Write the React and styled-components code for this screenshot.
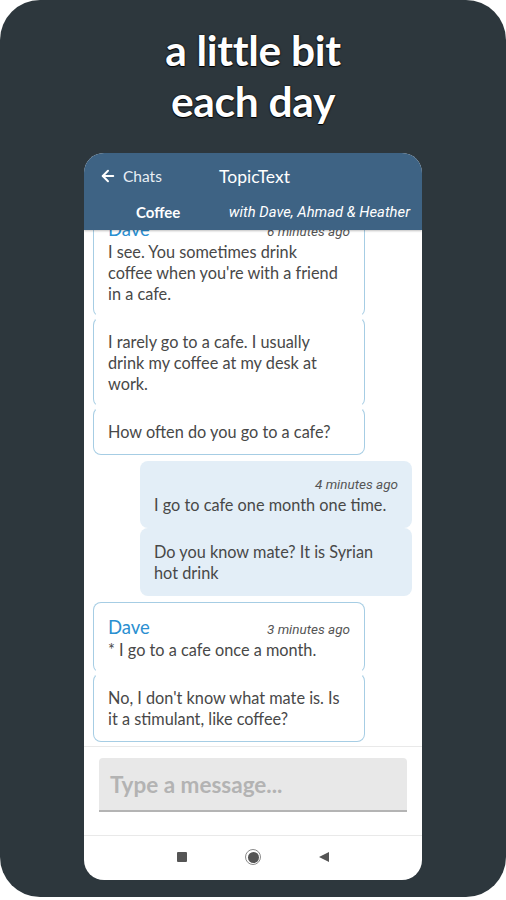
import styled, { createGlobalStyle } from "styled-components";
import { ArrowLeft } from "lucide-react";

const GlobalStyle = createGlobalStyle`
  body {
    margin: 0;
    background: #ffffff;
    font-family: Lato, "Noto Sans", sans-serif;
  }
`;

const Page = styled.div`
  width: 506px;
  height: 897px;
  background: #2d373d;
  border-radius: 40px;
  display: flex;
  flex-direction: column;
  align-items: center;
  box-sizing: border-box;
  padding-top: 24px;
`;

const Title = styled.h1`
  margin: 0;
  font-family: Lato, sans-serif;
  font-weight: 700;
  font-size: 42.5px;
  line-height: 51px;
  color: #ffffff;
  text-align: center;
  text-shadow: 0 0 2px #000, 0 1px 1px #000;
  letter-spacing: -0.3px;
`;

const Phone = styled.div`
  margin-top: 27px;
  width: 338px;
  height: 727px;
  background: #ffffff;
  border-radius: 20px;
  overflow: hidden;
  display: flex;
  flex-direction: column;
`;

const Header = styled.div`
  flex: none;
  height: 77px;
  box-sizing: border-box;
  padding: 10px 12px 5px 15px;
  background: #3e6384;
  color: #ffffff;
  display: flex;
  flex-direction: column;
  gap: 10px;
  position: relative;
  z-index: 1;
  box-shadow: 0 1px 2px rgba(0, 0, 0, 0.25);
`;

const HeaderRow = styled.div`
  height: 26px;
  display: grid;
  grid-template-columns: ${(p) => p.$cols};
  align-items: center;
`;

const Back = styled.div`
  display: flex;
  align-items: center;
  gap: 6px;
  font-family: Lato, sans-serif;
  font-size: 15.5px;
  color: #e8eef4;
`;

const TopicTitle = styled.div`
  font-family: Lato, sans-serif;
  font-weight: 400;
  font-size: 17.5px;
  text-align: center;
`;

const Topic = styled.div`
  font-family: Lato, sans-serif;
  font-weight: 700;
  font-size: 15px;
  padding-left: 37px;
`;

const Members = styled.div`
  font-family: Roboto, sans-serif;
  font-style: italic;
  font-size: 14.8px;
  text-align: right;
  white-space: nowrap;
`;

const ChatArea = styled.div`
  flex: 1;
  min-height: 0;
  overflow: hidden;
  display: flex;
  flex-direction: column;
  justify-content: flex-end;
  gap: 6px;
  padding: 0 10px 4px 9px;
`;

const Group = styled.div`
  flex: none;
  width: 272px;
  align-self: ${(p) => (p.$mine ? "flex-end" : "flex-start")};
  display: flex;
  flex-direction: column;
`;

const Bubble = styled.div`
  flex: none;
  box-sizing: border-box;
  border-radius: 8px;
  padding: ${(p) => (p.$mine ? "13px 14px" : "12.5px 14px")};
  background: ${(p) => (p.$mine ? "#e3eef7" : "#ffffff")};
  border: ${(p) => (p.$mine ? "none" : "1px solid #a6cde4")};
  border-top-color: ${(p) => (p.$mine || p.$first ? "#a6cde4" : "transparent")};
  border-bottom-color: ${(p) => (p.$mine || p.$last ? "#a6cde4" : "transparent")};
  font-size: 16.3px;
  line-height: 21px;
  color: #484848;
  white-space: pre-line;
`;

const Meta = styled.div`
  display: flex;
  justify-content: ${(p) => (p.$mine ? "flex-end" : "space-between")};
  align-items: baseline;
  height: ${(p) => (p.$mine ? "20px" : "23px")};
  white-space: nowrap;
`;

const Name = styled.span`
  font-size: 18.5px;
  color: #2b8fd1;
  line-height: 23px;
`;

const Time = styled.span`
  font-family: Roboto, sans-serif;
  font-style: italic;
  font-size: 13.5px;
  color: #555;
`;

const Divider = styled.div`
  flex: none;
  height: 1px;
  background: #e9e9e9;
`;

const Composer = styled.div`
  flex: none;
  padding: 11px 15px 23px 15px;
`;

const Input = styled.div`
  height: 54px;
  box-sizing: border-box;
  background: #e8e8e8;
  border-radius: 4px 4px 0 0;
  border-bottom: 2px solid #b4b4b4;
  display: flex;
  align-items: center;
  padding: 0 11px;
  font-size: 22.5px;
  font-weight: 700;
  color: #b3b3b3;
`;

const NavBar = styled.div`
  flex: none;
  height: 44px;
  display: flex;
  justify-content: center;
  align-items: center;
  gap: 58px;
  padding-bottom: 2px;
  box-sizing: border-box;
`;

const Square = styled.div`
  width: 10px;
  height: 10px;
  background: #555;
  border-radius: 1px;
`;

const HomeRing = styled.div`
  width: 14px;
  height: 14px;
  border-radius: 50%;
  border: 1.5px solid #8a8a8a;
  display: flex;
  align-items: center;
  justify-content: center;
`;

const HomeDot = styled.div`
  width: 11px;
  height: 11px;
  border-radius: 50%;
  background: #555;
`;

const BackTri = styled.div`
  width: 0;
  height: 0;
  border-top: 5.5px solid transparent;
  border-bottom: 5.5px solid transparent;
  border-right: 10px solid #555;
`;

const groups = [
  {
    mine: false,
    items: [
      {
        name: "Dave",
        time: "6 minutes ago",
        text: "I see. You sometimes drink\ncoffee when you're with a friend\nin a cafe.",
      },
      { text: "I rarely go to a cafe. I usually\ndrink my coffee at my desk at\nwork." },
      { text: "How often do you go to a cafe?" },
    ],
  },
  {
    mine: true,
    items: [
      { time: "4 minutes ago", text: "I go to cafe one month one time." },
      { text: "Do you know mate? It is Syrian\nhot drink" },
    ],
  },
  {
    mine: false,
    items: [
      { name: "Dave", time: "3 minutes ago", text: "* I go to a cafe once a month." },
      { text: "No, I don't know what mate is. Is\nit a stimulant, like coffee?" },
    ],
  },
];

export default function App() {
  return (
    <>
      <GlobalStyle />
      <Page>
        <Title>
          a little bit
          <br />
          each day
        </Title>
        <Phone>
          <Header>
            <HeaderRow $cols="1fr auto 1fr">
              <Back>
                <ArrowLeft size={18} strokeWidth={2.6} color="#ffffff" />
                Chats
              </Back>
              <TopicTitle>TopicText</TopicTitle>
              <div />
            </HeaderRow>
            <HeaderRow $cols="auto 1fr">
              <Topic>Coffee</Topic>
              <Members>with Dave, Ahmad &amp; Heather</Members>
            </HeaderRow>
          </Header>
          <ChatArea>
            {groups.map((g, gi) => (
              <Group key={gi} $mine={g.mine}>
                {g.items.map((m, i) => (
                  <Bubble
                    key={i}
                    $mine={g.mine}
                    $first={i === 0}
                    $last={i === g.items.length - 1}
                  >
                    {m.time && (
                      <Meta $mine={g.mine}>
                        {m.name && <Name>{m.name}</Name>}
                        <Time>{m.time}</Time>
                      </Meta>
                    )}
                    {m.text}
                  </Bubble>
                ))}
              </Group>
            ))}
          </ChatArea>
          <Divider />
          <Composer>
            <Input>Type a message...</Input>
          </Composer>
          <Divider />
          <NavBar>
            <Square />
            <HomeRing>
              <HomeDot />
            </HomeRing>
            <BackTri />
          </NavBar>
        </Phone>
      </Page>
    </>
  );
}
